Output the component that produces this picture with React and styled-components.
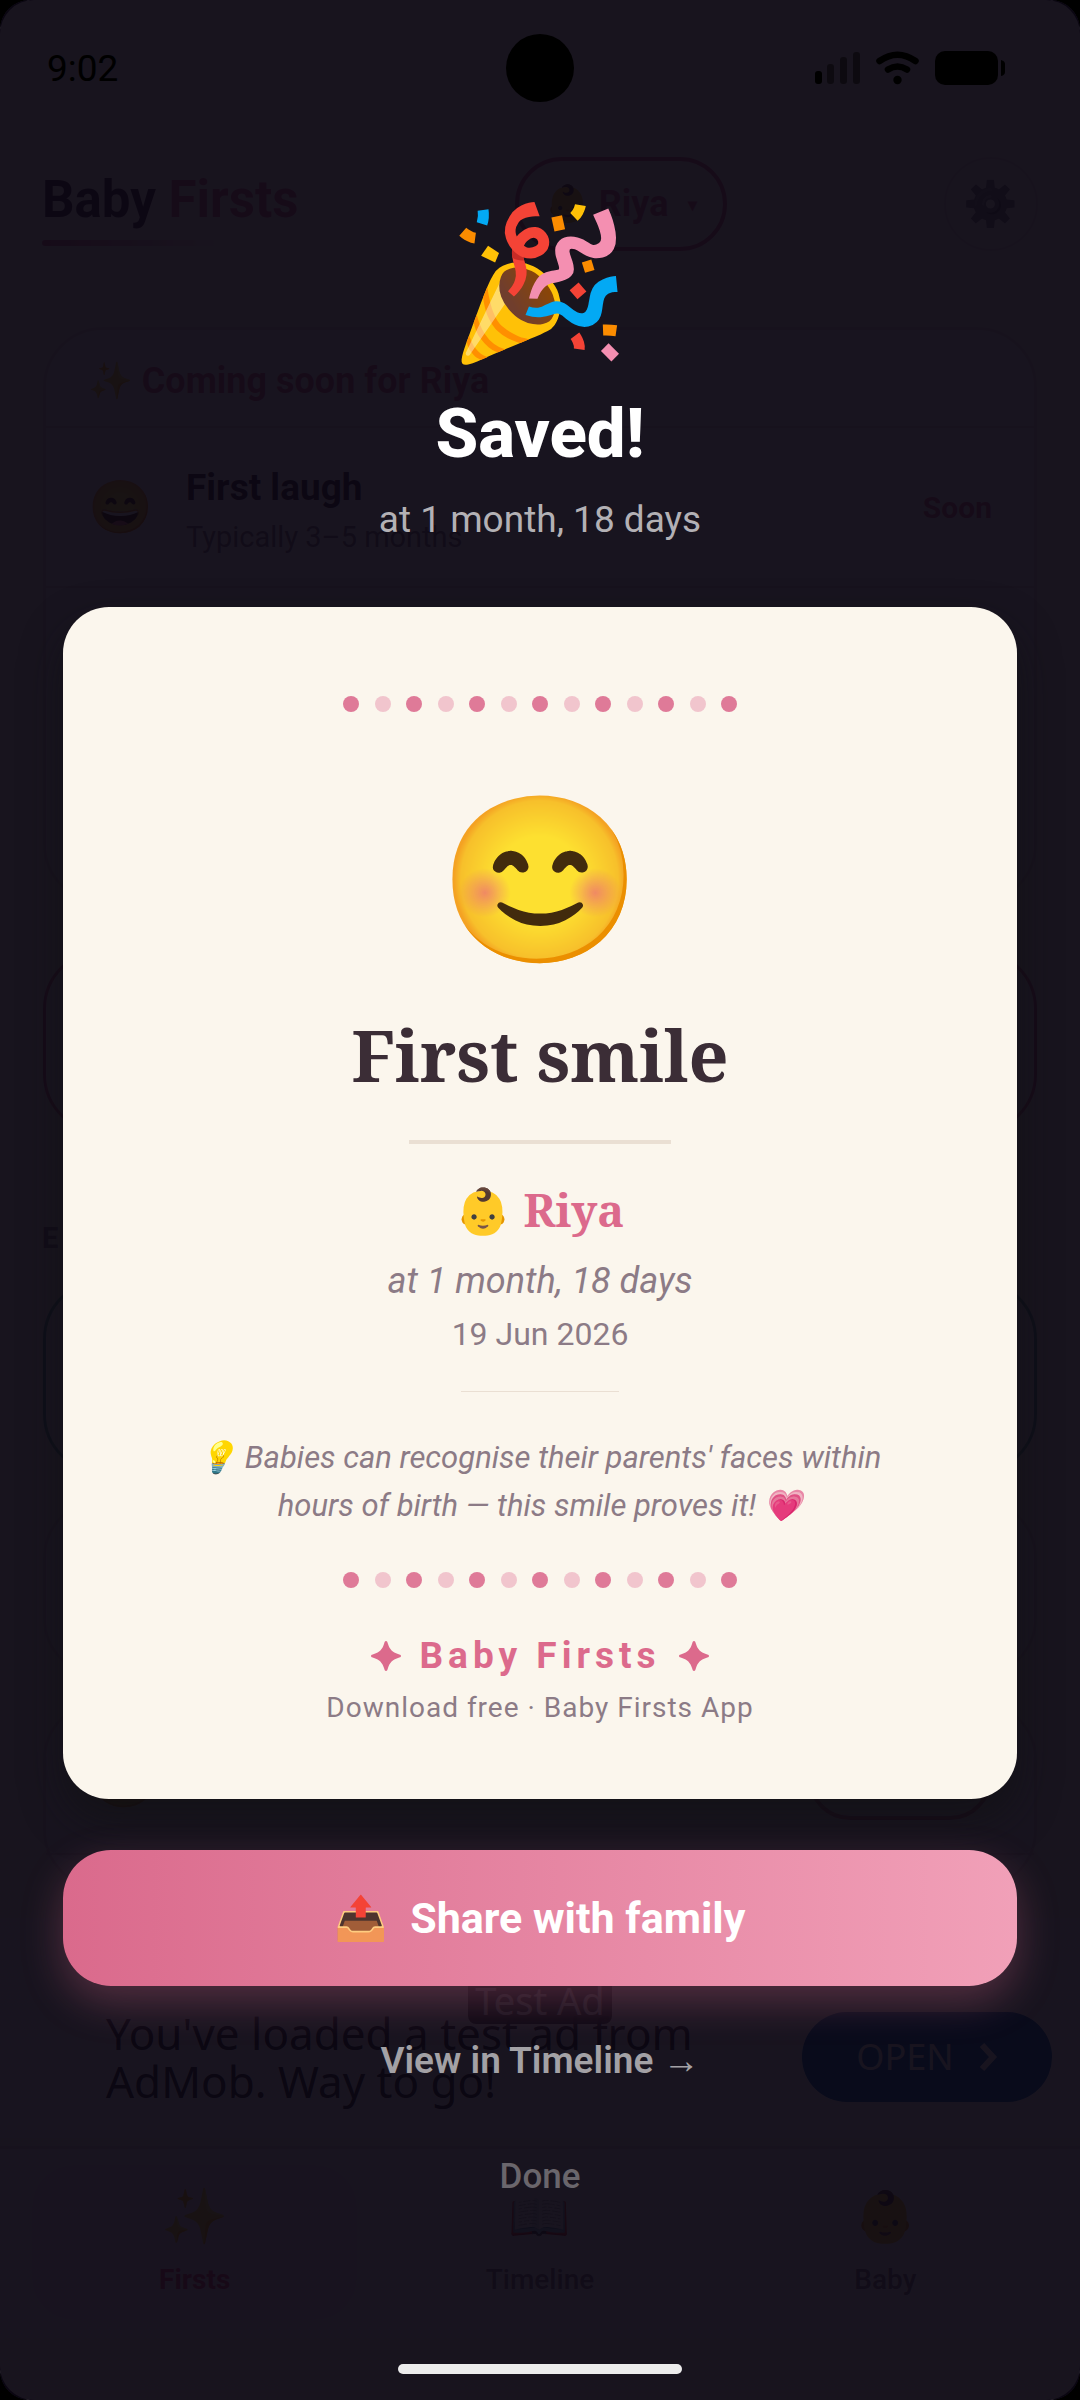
import React, { useState } from "react";
import styled, { createGlobalStyle } from "styled-components";

const GlobalStyle = createGlobalStyle`
  * {
    box-sizing: border-box;
  }
  body {
    margin: 0;
    background: #000;
    font-family: Roboto, "Noto Color Emoji", sans-serif;
  }
  h1, h2, h3, p {
    margin: 0;
  }
  button {
    border: none;
    padding: 0;
    background: none;
    font-family: inherit;
    cursor: pointer;
  }
`;

/* the app, the celebration and the system bars are stacked in one cell */
const Phone = styled.div`
  display: grid;
  grid-template-columns: minmax(0, 1fr);
  min-height: 100vh;
  border-radius: 30px;
  overflow: hidden;
  background: #18141e;

  > * {
    grid-area: 1 / 1;
  }
`;

/* ---------- home screen ---------- */

const Home = styled.div`
  display: flex;
  flex-direction: column;
  padding-top: 157px;
  border-radius: 34px;
  background: #fbf6ee;
`;

const Header = styled.header`
  display: flex;
  justify-content: space-between;
  align-items: center;
  height: 94px;
  padding: 0 42px;
`;

const Logo = styled.h1`
  padding-top: 8px;
  font-size: 51px;
  line-height: 60px;
  font-weight: 700;
  color: #3b2d36;

  span {
    color: #d9698b;
  }

  &::after {
    content: "";
    display: block;
    width: 180px;
    height: 6px;
    margin-top: 10px;
    border-radius: 3px;
    background: linear-gradient(90deg, #d9698b, transparent);
  }
`;

const BabyPicker = styled.button`
  display: flex;
  align-items: center;
  justify-content: center;
  gap: 20px;
  width: 212px;
  height: 94px;
  border: 4px solid #d9698b;
  border-radius: 47px;
  color: #d9698b;
  font-size: 36px;
  font-weight: 700;

  small {
    font-size: 18px;
  }
`;

const Gear = styled.button`
  width: 94px;
  height: 94px;
  border: 2px solid #eadfd3;
  border-radius: 50%;
  font-size: 44px;

  span {
    filter: grayscale(1) brightness(0.8);
  }
`;

const Panel = styled.section`
  height: ${(p) => p.$height}px;
  margin: ${(p) => p.$gap}px 43px 0;
  border: 3px solid ${(p) => p.$line || "#eadfd3"};
  border-radius: 60px;
  background: #fffdfa;
`;

const PanelTitle = styled.h2`
  height: 98px;
  padding: 22px 42px;
  border-bottom: 2px solid #eadfd3;
  color: #d9698b;
  font-size: 36px;
  line-height: 58px;
  font-weight: 700;
`;

const Milestone = styled.div`
  display: flex;
  align-items: center;
  height: ${(p) => p.$height}px;
  padding: 0 42px;
  border-bottom: 2px solid #eadfd3;
`;

const Face = styled.span`
  width: 98px;
  font-size: ${(p) => p.$size}px;
`;

const MilestoneText = styled.div`
  flex: 1;
  padding-top: 8px;

  h3 {
    font-size: 37px;
    line-height: 52px;
    color: #3b2d36;
  }
  p {
    font-size: 29px;
    line-height: 46px;
    color: #8c7b86;
  }
`;

const Soon = styled.span`
  font-size: 30px;
  font-weight: 700;
  color: #d9698b;
`;

const LogButton = styled.button`
  width: 184px;
  height: 84px;
  border: 4px solid #d9698b;
  border-radius: 42px;
`;

const SectionLabel = styled.h2`
  margin: 79px 42px 0;
  font-size: 29px;
  line-height: 50px;
  color: #8c7b86;
`;

const Ad = styled.aside`
  display: flex;
  flex-direction: column;
  height: 220px;
  margin-top: 28px;
  background: #fff;
`;

const AdBadge = styled.span`
  align-self: center;
  width: 144px;
  height: 48px;
  margin-top: 58px;
  border-radius: 0 0 8px 8px;
  background: #3c3c3c;
  color: #fff;
  font: 38px/48px "Noto Sans", sans-serif;
  text-align: center;
`;

const AdBody = styled.div`
  display: flex;
  justify-content: space-between;
  align-items: center;
  height: 106px;
  margin-top: -20px;
  padding: 0 28px 0 106px;

  p {
    width: 620px;
    font: 44px/48px "Noto Sans", sans-serif;
    color: #222;
  }
`;

const OpenLink = styled.a`
  display: flex;
  align-items: center;
  justify-content: center;
  gap: 24px;
  width: 250px;
  height: 90px;
  border-radius: 45px;
  background: #0062b4;
  color: #fff;
  font: 36px/48px "Noto Sans", sans-serif;
  text-decoration: none;
`;

const TabBar = styled.nav`
  display: grid;
  grid-template-columns: repeat(3, 1fr);
  height: 192px;
  margin-top: 8px;
  padding: 16px 22px 18px;
  border-top: 3px solid #eadfd3;
  background: #fffdfa;
`;

const Tab = styled.button`
  display: flex;
  flex-direction: column;
  align-items: center;
  justify-content: center;
  gap: 8px;
  margin: 0 10px;
  border-radius: 42px;
  background: ${(p) => (p.$active ? "#fbeef0" : "none")};
  color: ${(p) => (p.$active ? "#e2487c" : "#8c7b86")};
  font-size: 28px;
  line-height: 44px;
  font-weight: ${(p) => (p.$active ? 700 : 500)};

  span {
    font-size: ${(p) => (p.$active ? 54 : 50)}px;
    line-height: 66px;
  }
`;

/* ---------- celebration ---------- */

const Overlay = styled.div`
  z-index: 1;
  display: flex;
  flex-direction: column;
  align-items: center;
  padding: 194px 63px 0;
  background: rgba(10, 5, 17, 0.94);
  text-align: center;
`;

const Popper = styled.div`
  font-size: 148px;
  line-height: 180px;
`;

const Saved = styled.h1`
  margin-top: 20px;
  font-size: 69px;
  line-height: 80px;
  font-weight: 800;
  color: #fff;
`;

const SavedAge = styled.p`
  margin-top: 24px;
  font-size: 37px;
  line-height: 44px;
  color: #b3b1b5;
`;

const Card = styled.article`
  display: flex;
  flex-direction: column;
  align-items: center;
  align-self: stretch;
  margin-top: 65px;
  padding: 89px 84px 73px;
  border-radius: 46px;
  background: #fbf6ed;
  box-shadow: 0 20px 40px rgba(16, 16, 18, 0.6);
`;

const Dots = styled.div`
  display: flex;
  justify-content: space-between;
  width: 394px;
  margin-top: ${(p) => p.$gap}px;
`;

const Dot = styled.span`
  width: 16px;
  height: 16px;
  border-radius: 50%;
  background: ${(p) => (p.$light ? "#f1c5cd" : "#df7a98")};
`;

const Smile = styled.div`
  margin-top: 69px;
  font-size: 164px;
  line-height: 200px;
`;

const CardTitle = styled.h2`
  margin-top: 29px;
  font-family: "Noto Serif", serif;
  font-size: 70px;
  line-height: 90px;
  color: #3b2d36;
`;

const Rule = styled.div`
  width: ${(p) => (p.$thin ? 158 : 262)}px;
  height: ${(p) => (p.$thin ? 1 : 4)}px;
  margin-top: ${(p) => (p.$thin ? 37 : 40)}px;
  background: #eadfd3;
`;

const BabyName = styled.h3`
  margin-top: 36px;
  font-family: "Noto Serif", "Noto Color Emoji", serif;
  font-size: 45px;
  line-height: 60px;
  color: #dc6a8c;
`;

const Age = styled.p`
  margin-top: 18px;
  font-size: 36px;
  line-height: 46px;
  font-style: italic;
  color: #8c7b86;
`;

const DateLine = styled.p`
  margin-top: 10px;
  font-size: 32px;
  line-height: 40px;
  color: #8c7b86;
`;

const Fact = styled.p`
  max-width: 700px;
  margin-top: 42px;
  font-size: 31px;
  line-height: 48px;
  font-style: italic;
  color: #8c7b86;
`;

const Brand = styled.p`
  display: flex;
  align-items: center;
  gap: 18px;
  margin-top: 44px;
  font-size: 37px;
  line-height: 48px;
  font-weight: 700;
  letter-spacing: 5px;
  color: #dc6a8c;
`;

const Download = styled.p`
  margin-top: 10px;
  font-size: 28px;
  line-height: 36px;
  letter-spacing: 1px;
  color: #8c7b86;
`;

const ShareButton = styled.button`
  display: flex;
  align-items: center;
  justify-content: center;
  gap: 22px;
  align-self: stretch;
  height: 136px;
  margin-top: 51px;
  border-radius: 48px;
  background: linear-gradient(90deg, #da6a8c, #f1a0b8);
  box-shadow: 0 16px 42px rgba(218, 106, 140, 0.3);
  color: #fff;
  font-size: 43px;
  font-weight: 700;
`;

const TextButton = styled.button`
  margin-top: ${(p) => p.$gap}px;
  color: ${(p) => p.$color};
  font-size: ${(p) => p.$size}px;
  line-height: 48px;
  font-weight: ${(p) => p.$weight};
`;

/* ---------- system bars ---------- */

const System = styled.div`
  z-index: 2;
  display: flex;
  flex-direction: column;
  justify-content: space-between;
  align-items: center;
  padding-bottom: 26px;
  pointer-events: none;
`;

const StatusBar = styled.div`
  display: grid;
  grid-template-columns: 1fr auto 1fr;
  align-items: center;
  align-self: stretch;
  height: 136px;
  padding: 0 75px 0 47px;
  font-size: 37px;
  color: #000;

  svg {
    justify-self: end;
  }
`;

const Camera = styled.span`
  width: 68px;
  height: 68px;
  margin-left: 28px;
  border-radius: 50%;
  background: #000;
`;

const HomeBar = styled.span`
  width: 284px;
  height: 10px;
  border-radius: 5px;
  background: #ececec;
`;

function StatusIcons() {
  return (
    <svg width="190" height="34" viewBox="0 0 190 34">
      <rect x="0" y="20" width="7" height="13" rx="3" />
      <g opacity="0.45">
        <rect x="12" y="13" width="7" height="20" rx="3" />
        <rect x="25" y="6" width="7" height="27" rx="3" />
        <rect x="38" y="1" width="7" height="32" rx="3" />
      </g>
      <g fill="none" stroke="#000" strokeWidth="6.5" strokeLinecap="round">
        <path d="M64.500 10 Q82.500 -2.500 100.500 10" />
        <path d="M73 18.500 Q82.500 12.500 92 18.500" />
      </g>
      <circle cx="82.500" cy="29" r="4.200" />
      <rect x="120" y="0" width="63" height="34" rx="10" />
      <path d="M186 9 Q190 10 190 13 V21 Q190 24 186 25 Z" />
    </svg>
  );
}

function Star() {
  return (
    <svg width="30" height="30" viewBox="0 0 30 30" fill="currentColor" aria-hidden="true">
      <path d="M15 0 C16.200 0 16.400 1.200 17 3 C18.800 8.500 21.500 11.200 27 13 C28.800 13.600 30 13.800 30 15 C30 16.200 28.800 16.400 27 17 C21.500 18.800 18.800 21.500 17 27 C16.400 28.800 16.200 30 15 30 C13.800 30 13.600 28.800 13 27 C11.200 21.500 8.500 18.800 3 17 C1.200 16.400 0 16.200 0 15 C0 13.800 1.200 13.600 3 13 C8.500 11.200 11.200 8.500 13 3 C13.600 1.200 13.800 0 15 0 Z" />
    </svg>
  );
}

function DotRow({ gap }) {
  return (
    <Dots $gap={gap}>
      {Array.from({ length: 13 }, (_, i) => (
        <Dot key={i} $light={i % 2 === 1} />
      ))}
    </Dots>
  );
}

function HomeScreen() {
  return (
    <Home>
      <Header>
        <Logo>
          Baby <span>Firsts</span>
        </Logo>
        <BabyPicker>
          👶 Riya <small>▾</small>
        </BabyPicker>
        <Gear aria-label="Settings">
          <span>⚙️</span>
        </Gear>
      </Header>

      <Panel $height={577} $gap={76}>
        <PanelTitle>✨ Coming soon for Riya</PanelTitle>
        <Milestone $height={160}>
          <Face $size={52}>😄</Face>
          <MilestoneText>
            <h3>First laugh</h3>
            <p>Typically 3–5 months</p>
          </MilestoneText>
          <Soon>Soon</Soon>
        </Milestone>
      </Panel>
      <Panel $height={185} $gap={45} $line="#d9698b" />

      <SectionLabel>E</SectionLabel>
      <Panel $height={195} $gap={16} $line="#5fae9c" />
      <Panel $height={180} $gap={24} />
      <Panel $height={190} $gap={22}>
        <Milestone $height={152}>
          <Face $size={58}>😄</Face>
          <MilestoneText />
          <LogButton aria-label="Log" />
        </Milestone>
      </Panel>

      <Ad>
        <AdBadge>Test Ad</AdBadge>
        <AdBody>
          <p>You've loaded a test ad from AdMob. Way to go!</p>
          <OpenLink href="#open">
            OPEN
            <svg width="20" height="30" viewBox="0 0 20 30">
              <path d="M4 3 L15 15 L4 27" fill="none" stroke="#fff" strokeWidth="6" />
            </svg>
          </OpenLink>
        </AdBody>
      </Ad>

      <TabBar>
        <Tab $active>
          <span>✨</span>
          Firsts
        </Tab>
        <Tab>
          <span>📖</span>
          Timeline
        </Tab>
        <Tab>
          <span>👶</span>
          Baby
        </Tab>
      </TabBar>
    </Home>
  );
}

function Celebration({ onClose }) {
  return (
    <Overlay role="dialog" aria-label="Saved">
      <Popper>🎉</Popper>
      <Saved>Saved!</Saved>
      <SavedAge>at 1 month, 18 days</SavedAge>

      <Card>
        <DotRow gap={0} />
        <Smile>😊</Smile>
        <CardTitle>First smile</CardTitle>
        <Rule />
        <BabyName>👶 Riya</BabyName>
        <Age>at 1 month, 18 days</Age>
        <DateLine>19 Jun 2026</DateLine>
        <Rule $thin />
        <Fact>
          💡 Babies can recognise their parents' faces within hours of birth —
          this smile proves it! 💗
        </Fact>
        <DotRow gap={42} />
        <Brand>
          <Star />
          Baby Firsts
          <Star />
        </Brand>
        <Download>Download free · Baby Firsts App</Download>
      </Card>

      <ShareButton>
        <span>📤</span>
        Share with family
      </ShareButton>
      <TextButton $gap={51} $size={37} $weight={600} $color="#a3a1a5">
        View in Timeline →
      </TextButton>
      <TextButton $gap={68} $size={35} $weight={500} $color="#6a666c" onClick={onClose}>
        Done
      </TextButton>
    </Overlay>
  );
}

export default function App() {
  const [saved, setSaved] = useState(true);

  return (
    <Phone>
      <GlobalStyle />
      <HomeScreen />
      {saved && <Celebration onClose={() => setSaved(false)} />}
      <System>
        <StatusBar>
          <span>9:02</span>
          <Camera />
          <StatusIcons />
        </StatusBar>
        <HomeBar />
      </System>
    </Phone>
  );
}
